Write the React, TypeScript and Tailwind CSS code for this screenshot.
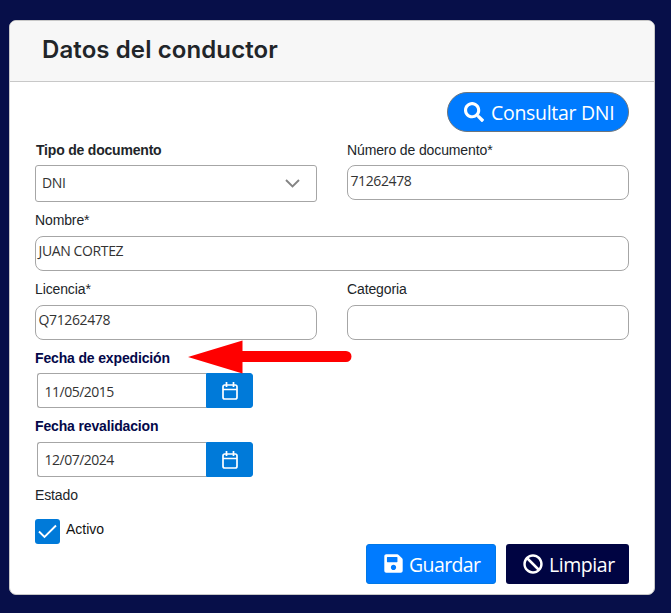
import type { ReactNode } from 'react'
import { FaBan, FaSave, FaSearch } from 'react-icons/fa'
import { clsx } from 'clsx'

type LabelProps = {
  children: ReactNode
  className?: string
}

function Label({ children, className }: LabelProps) {
  return (
    <span
      className={clsx(
        "block h-5 whitespace-nowrap font-['Liberation_Sans',Arial,sans-serif] text-[14px] leading-5",
        className ?? 'tracking-[-0.12px] text-[#212529]',
      )}
    >
      {children}
    </span>
  )
}

function TextField({ value, className }: { value?: string; className?: string }) {
  return (
    <div
      className={clsx(
        'h-[35px] rounded-lg border border-[#a6a6a6] bg-white pl-[2.5px] text-[14px] tracking-[-0.38px] text-[#333]',
        className ?? 'leading-[28px]',
      )}
    >
      {value}
    </div>
  )
}

function CalendarIcon() {
  return (
    <svg width="18" height="18" viewBox="0 0 18 18" fill="none" stroke="#fff" strokeWidth="1.7">
      <rect x="2" y="3" width="14" height="14" rx="1.8" />
      <path d="M2 7.5H16M5.5 0V5M12.5 0V5" />
    </svg>
  )
}

function DateField({ value, className }: { value: string; className?: string }) {
  return (
    <div className={clsx('ml-0.5 flex h-[35px] w-[216px]', className ?? 'leading-[34px]')}>
      <div className="w-[169px] rounded-l-[3px] border border-r-0 border-[#a6a6a6] pl-[6.5px] text-[14px] tracking-[-0.5px] text-[#333]">
        {value}
      </div>
      <button
        type="button"
        className="flex w-[47px] items-center justify-center rounded-r-[3px] border border-[#007ad9] bg-[#007ad9]"
      >
        <CalendarIcon />
      </button>
    </div>
  )
}

function Arrow() {
  return (
    <svg className="absolute left-[178px] top-[319px]" width="164" height="34" viewBox="0 0 164 34" fill="#f00">
      <path d="M0 17 54.5 0.5V11H158a5.5 5.5 0 0 1 0 11H54.5V33.5Z" />
    </svg>
  )
}

export default function App() {
  return (
    <div className="h-[613px] w-[671px] bg-[#070f49] pl-[9px] pt-5 font-['Open_Sans','Noto_Sans',sans-serif]">
      <div className="relative flex h-[575px] w-[646px] flex-col overflow-hidden rounded-[7px] border border-[#c8c8c8] bg-white">
        <header className="h-[61px] border-b border-[#c8c8c8] bg-[#f7f7f7] pl-8 pt-3">
          <h1 className="whitespace-nowrap font-['Inter',sans-serif] text-[24px] font-semibold leading-[34px] tracking-[0.1px] text-[#212529]">
            Datos del conductor
          </h1>
        </header>

        <div className="pl-[25px] pr-[25px] pt-[10px]">
          <div className="flex justify-end">
            <button
              type="button"
              className="flex h-10 w-[182px] items-center rounded-full border border-[#6c757d] bg-[#007bff] pl-4 text-white"
            >
              <FaSearch className="mb-px h-5 w-5" />
              <span className="ml-[7px] mt-0.5 whitespace-nowrap text-[19.5px] leading-6 tracking-[-0.3px]">
                Consultar DNI
              </span>
            </button>
          </div>

          <div className="mt-2 grid grid-cols-2 gap-x-[30px]">
            <div>
              <Label className="pl-px font-bold tracking-[-0.2px] text-[#212529]">Tipo de documento</Label>
              <div className="mt-[5px] flex h-[37px] items-center justify-between rounded-[3px] border border-[#a6a6a6] pl-[6px] pr-4 text-[14px] tracking-[-0.35px] text-[#333]">
                <span className="-mt-0.5">DNI</span>
                <svg width="15" height="9" viewBox="0 0 15 9" fill="none" stroke="#848484" strokeWidth="1.9">
                  <path d="M1 1 7.5 7.5 14 1" />
                </svg>
              </div>
            </div>
            <div>
              <Label>Número de documento*</Label>
              <div className="mt-[5px]">
                <TextField value="71262478" className="leading-[30px]" />
              </div>
            </div>
          </div>

          <div className="mt-2">
            <Label>Nombre*</Label>
            <div className="mt-[6px]">
              <TextField value="JUAN CORTEZ" />
            </div>
          </div>

          <div className="mt-2 grid grid-cols-2 gap-x-[30px]">
            <div>
              <Label>Licencia*</Label>
              <div className="mt-[6px]">
                <TextField value="Q71262478" />
              </div>
            </div>
            <div>
              <Label>Categoria</Label>
              <div className="mt-[6px]">
                <TextField />
              </div>
            </div>
          </div>

          <div className="mt-2 space-y-[5px]">
            <Label className="font-bold tracking-[-0.15px] text-[#04084a]">Fecha de expedición</Label>
            <DateField value="11/05/2015" className="leading-[36px]" />
          </div>

          <div className="mt-2 space-y-[6px]">
            <Label className="font-bold tracking-[-0.15px] text-[#04084a]">Fecha revalidacion</Label>
            <DateField value="12/07/2024" />
          </div>

          <div className="mt-2">
            <Label>Estado</Label>
            <div className="mt-[14px] flex">
              <span className="flex h-[25px] w-[25px] items-center justify-center rounded-[3px] bg-[#007ad9]">
                <svg width="19" height="15" viewBox="0 0 19 15" fill="none" stroke="#fff" strokeWidth="1.9">
                  <path d="M1 7.5 6.5 13 18 1.5" />
                </svg>
              </span>
              <Label className="ml-[6px] text-[#111]">Activo</Label>
            </div>
          </div>

          <div className="flex justify-end gap-[10px]">
            <button
              type="button"
              className="flex h-10 w-[130px] items-center rounded-[3px] border border-[#0078e7] bg-[#007bff] pl-4 text-white"
            >
              <FaSave className="mb-px h-[21px] w-[21px]" />
              <span className="ml-[5px] mt-0.5 text-[19.5px] leading-6 tracking-[-0.6px]">Guardar</span>
            </button>
            <button
              type="button"
              className="flex h-10 w-[123px] items-center rounded-[3px] bg-[#000442] pl-[17px] text-white"
            >
              <FaBan className="mb-px h-5 w-5" />
              <span className="ml-[6px] mt-0.5 text-[19.5px] leading-6 tracking-[-0.45px]">Limpiar</span>
            </button>
          </div>
        </div>

        <Arrow />
      </div>
    </div>
  )
}
